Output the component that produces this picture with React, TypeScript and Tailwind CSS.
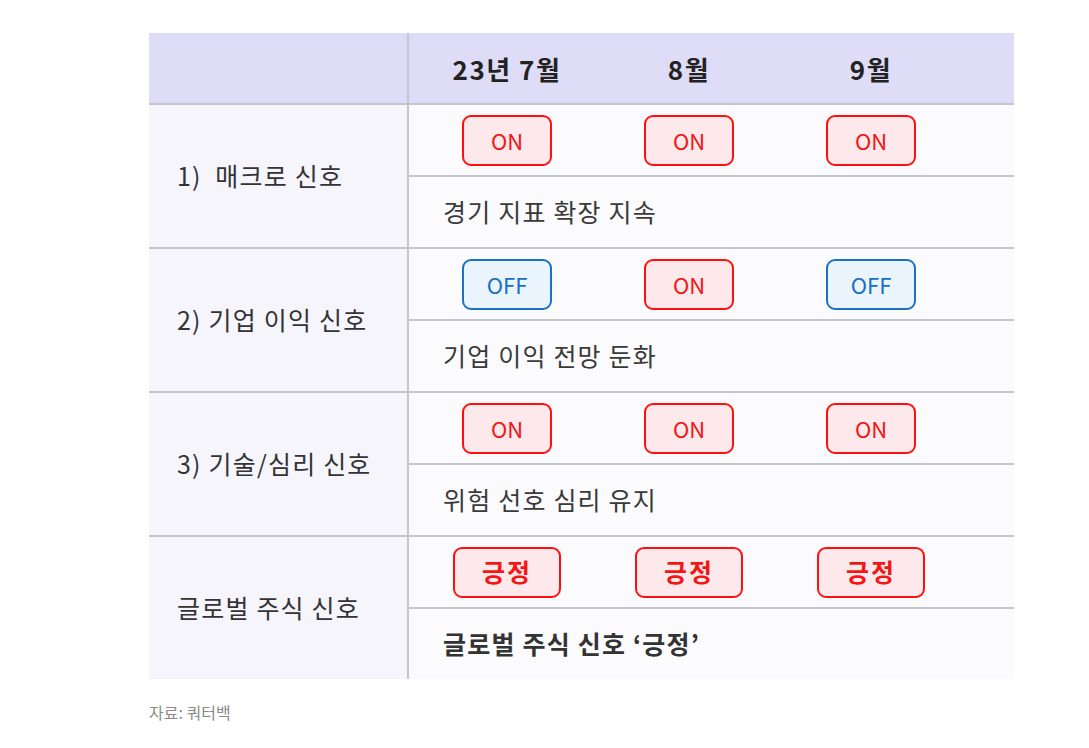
import React from "react";

type Sig = "ON" | "OFF";

const rows: { label: string; signals: Sig[]; note: string }[] = [
  { label: "1)  매크로 신호", signals: ["ON", "ON", "ON"], note: "경기 지표 확장 지속" },
  { label: "2) 기업 이익 신호", signals: ["OFF", "ON", "OFF"], note: "기업 이익 전망 둔화" },
  { label: "3) 기술/심리 신호", signals: ["ON", "ON", "ON"], note: "위험 선호 심리 유지" },
];

const font = { fontFamily: '"Noto Sans CJK KR", "Noto Sans", sans-serif' };

function Badge({ v }: { v: Sig }) {
  return v === "ON" ? (
    <div className="flex h-[51px] w-[90px] items-center justify-center rounded-[9px] border-2 border-[#ff1010] bg-[#fde9eb] text-[22px] text-[#f21616]">
      ON
    </div>
  ) : (
    <div className="flex h-[51px] w-[90px] items-center justify-center rounded-[9px] border-2 border-[#1a72c4] bg-[#eaf4fd] text-[22px] text-[#1a6fbf]">
      OFF
    </div>
  );
}

function Section({ label, children, note }: { label: string; children: React.ReactNode; note: React.ReactNode }) {
  return (
    <div className="flex border-t-2 border-[#c5c5cb]">
      <div className="flex w-[260px] items-center whitespace-pre border-r-2 border-[#c5c5cb] bg-[#f6f5fc] pl-[28px] text-[25px] tracking-[1.2px] text-[#333]">
        {label}
      </div>
      <div className="flex flex-1 flex-col bg-[#fbfbfd]">
        <div className="grid h-[70px] grid-cols-[182px_182px_182px] items-center justify-items-center pl-[7px]">
          {children}
        </div>
        <div className="flex h-[72px] items-center border-t-2 border-[#c5c5cb] pl-[34px] text-[25px] tracking-[1.2px] text-[#3a3a3a]">
          {note}
        </div>
      </div>
    </div>
  );
}

export default function App() {
  return (
    <div className="h-[748px] w-full bg-white pl-[149px] pt-[33px]" style={font}>
      <div className="w-[865px]">
        {/* 헤더 */}
        <div className="flex h-[70px] bg-[#dfdcf7]">
          <div className="w-[260px] border-r-2 border-[#c5c5cb]" />
          <div className="grid flex-1 grid-cols-[182px_182px_182px] items-center justify-items-center pl-[7px] text-[26px] font-bold tracking-[1.5px] text-[#222]">
            <span>23년 7월</span>
            <span>8월</span>
            <span>9월</span>
          </div>
        </div>

        {rows.map((r) => (
          <Section key={r.label} label={r.label} note={r.note}>
            {r.signals.map((s, i) => (
              <Badge key={i} v={s} />
            ))}
          </Section>
        ))}

        <Section label="글로벌 주식 신호" note={<span className="font-bold text-[#333]">글로벌 주식 신호 ‘긍정’</span>}>
          {[0, 1, 2].map((i) => (
            <div
              key={i}
              className="flex h-[51px] w-[108px] items-center justify-center rounded-[9px] border-2 border-[#ff1010] bg-[#fde9eb] text-[25px] font-bold tracking-[2px] text-[#f21616]"
            >
              긍정
            </div>
          ))}
        </Section>
      </div>

      <p className="mt-[21px] text-[16px] text-[#8a8a8a]">자료: 쿼터백</p>
    </div>
  );
}
